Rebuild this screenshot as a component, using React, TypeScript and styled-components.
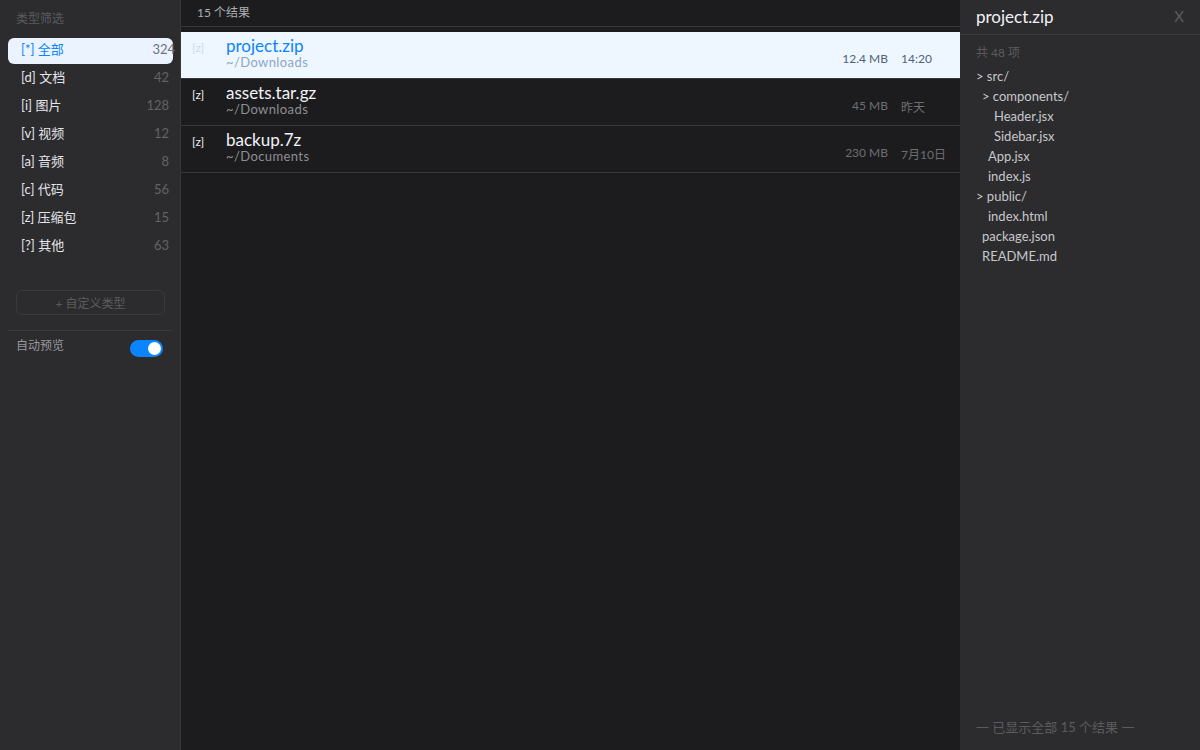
import styled, { createGlobalStyle } from "styled-components";

const GlobalStyle = createGlobalStyle`
  html, body {
    margin: 0;
    padding: 0;
    height: 100%;
    background: #1c1c1e;
  }
  #root {
    height: 100%;
  }
  * {
    box-sizing: border-box;
  }
`;

const FONT = `Lato, "Noto Sans CJK SC", sans-serif`;

type Category = { key: string; label: string; count: number };

const categories: Category[] = [
  { key: "*", label: "全部", count: 324 },
  { key: "d", label: "文档", count: 42 },
  { key: "i", label: "图片", count: 128 },
  { key: "v", label: "视频", count: 12 },
  { key: "a", label: "音频", count: 8 },
  { key: "c", label: "代码", count: 56 },
  { key: "z", label: "压缩包", count: 15 },
  { key: "?", label: "其他", count: 63 },
];

type FileItem = { name: string; path: string; size: string; time: string };

const files: FileItem[] = [
  { name: "project.zip", path: "~/Downloads", size: "12.4 MB", time: "14:20" },
  { name: "assets.tar.gz", path: "~/Downloads", size: "45 MB", time: "昨天" },
  { name: "backup.7z", path: "~/Documents", size: "230 MB", time: "7月10日" },
];

type TreeNode = { label: string; indent: number };

const tree: TreeNode[] = [
  { label: "> src/", indent: 0 },
  { label: "> components/", indent: 6 },
  { label: "Header.jsx", indent: 18 },
  { label: "Sidebar.jsx", indent: 18 },
  { label: "App.jsx", indent: 12 },
  { label: "index.js", indent: 12 },
  { label: "> public/", indent: 0 },
  { label: "index.html", indent: 12 },
  { label: "package.json", indent: 6 },
  { label: "README.md", indent: 6 },
];

const App = () => {
  return (
    <>
      <GlobalStyle />
      <Shell>
        {/* Filter sidebar */}
        <Sidebar>
          <SideTitle>类型筛选</SideTitle>
          <CategoryList>
            {categories.map((c, i) => (
              <CategoryItem key={c.key} $active={i === 0}>
                <span>
                  [{c.key}] {c.label}
                </span>
                <Count $active={i === 0}>{c.count}</Count>
              </CategoryItem>
            ))}
          </CategoryList>
          <CustomButton>+ 自定义类型</CustomButton>
          <SideDivider />
          <ToggleRow>
            <span>自动预览</span>
            <Toggle>
              <Knob />
            </Toggle>
          </ToggleRow>
        </Sidebar>

        {/* Results */}
        <Main>
          <ResultHeader>15 个结果</ResultHeader>
          <FileList>
            {files.map((f, i) => (
              <FileRow key={f.name} $selected={i === 0}>
                <TypeIcon $selected={i === 0}>[z]</TypeIcon>
                <FileInfo>
                  <FileName $selected={i === 0}>{f.name}</FileName>
                  <FilePath $selected={i === 0}>{f.path}</FilePath>
                </FileInfo>
                <FileSize $selected={i === 0}>{f.size}</FileSize>
                <FileTime $selected={i === 0}>{f.time}</FileTime>
              </FileRow>
            ))}
          </FileList>
        </Main>

        {/* Preview panel */}
        <Preview>
          <PreviewHeader>
            <PreviewTitle>project.zip</PreviewTitle>
            <CloseBtn>X</CloseBtn>
          </PreviewHeader>
          <PreviewBody>
            <ItemCount>共 48 项</ItemCount>
            {tree.map((n) => (
              <TreeRow key={n.label + n.indent} $indent={n.indent}>
                {n.label}
              </TreeRow>
            ))}
          </PreviewBody>
          <PreviewFooter>一 已显示全部 15 个结果 一</PreviewFooter>
        </Preview>
      </Shell>
    </>
  );
};

export default App;

// ===== Styled Components ===== //

const Shell = styled.div`
  display: flex;
  width: 1200px;
  height: 750px;
  font-family: ${FONT};
  overflow: hidden;
`;

const Sidebar = styled.aside`
  width: 181px;
  flex-shrink: 0;
  background: #2c2c2e;
  border-right: 1px solid #38383a;
  display: flex;
  flex-direction: column;
  padding: 11px 8px 0 8px;
`;

const SideTitle = styled.div`
  font-size: 12px;
  color: #5b5b5f;
  padding-left: 8px;
  height: 16px;
  line-height: 16px;
  margin-bottom: 11px;
`;

const CategoryList = styled.div`
  display: flex;
  flex-direction: column;
  gap: 2px;
`;

const CategoryItem = styled.div<{ $active?: boolean }>`
  height: 26px;
  width: 165px;
  display: flex;
  align-items: center;
  justify-content: space-between;
  padding: 0 0 5px 13px;
  border-radius: 6px;
  font-size: 13px;
  color: ${(p) => (p.$active ? "#0a84ff" : "#e5e5ea")};
  background: ${(p) => (p.$active ? "#eaf3ff" : "transparent")};
  white-space: nowrap;
`;

const Count = styled.span<{ $active?: boolean }>`
  color: ${(p) => (p.$active ? "#6d7480" : "#636366")};
  font-size: 13px;
  width: 30px;
  text-align: right;
  margin-right: ${(p) => (p.$active ? "-2px" : "4px")};
`;

const CustomButton = styled.div`
  margin: 30px 0 0 8px;
  width: 149px;
  height: 25px;
  border: 1px solid #3a3a3c;
  border-radius: 6px;
  display: flex;
  align-items: center;
  justify-content: center;
  font-size: 12px;
  color: #5b5b5f;
`;

const SideDivider = styled.div`
  height: 1px;
  background: #3a3a3c;
  margin: 15px 0 0 0;
  width: 164px;
`;

const ToggleRow = styled.div`
  display: flex;
  align-items: flex-start;
  justify-content: space-between;
  padding: 0 9px 0 8px;
  margin-top: 7px;
  font-size: 12px;
  line-height: 16px;
  color: #98989d;
`;

const Toggle = styled.div`
  width: 33px;
  height: 17px;
  border-radius: 9px;
  background: #0a84ff;
  position: relative;
  margin-top: 2px;
`;

const Knob = styled.div`
  position: absolute;
  right: 2px;
  top: 2px;
  width: 13px;
  height: 13px;
  border-radius: 50%;
  background: #ffffff;
`;

const Main = styled.main`
  flex: 1;
  background: #1c1c1e;
  display: flex;
  flex-direction: column;
`;

const ResultHeader = styled.div`
  height: 27px;
  border-bottom: 1px solid #38383a;
  font-size: 12px;
  color: #aeaeb2;
  padding: 3px 0 0 16px;
`;

const FileList = styled.div`
  margin-top: 5px;
  display: flex;
  flex-direction: column;
`;

const FileRow = styled.div<{ $selected?: boolean }>`
  height: 47px;
  display: flex;
  align-items: flex-start;
  padding: 5px 12px 0 11px;
  background: ${(p) => (p.$selected ? "#eef6ff" : "transparent")};
  border-bottom: 1px solid #38383a;
`;

const TypeIcon = styled.div<{ $selected?: boolean }>`
  width: 34px;
  flex-shrink: 0;
  font-size: 12px;
  padding-top: 3px;
  color: ${(p) => (p.$selected ? "#c5dcf2" : "#f2f2f7")};
`;

const FileInfo = styled.div`
  flex: 1;
  display: flex;
  flex-direction: column;
`;

const FileName = styled.div<{ $selected?: boolean }>`
  font-size: 17px;
  line-height: 18px;
  color: ${(p) => (p.$selected ? "#0a84ff" : "#f2f2f7")};
`;

const FilePath = styled.div<{ $selected?: boolean }>`
  font-size: 13px;
  line-height: 14px;
  letter-spacing: 0.4px;
  color: ${(p) => (p.$selected ? "#8ea6c4" : "#8e8e93")};
`;

const FileSize = styled.div<{ $selected?: boolean }>`
  width: 80px;
  text-align: right;
  font-size: 12px;
  padding-top: 14px;
  color: ${(p) => (p.$selected ? "#51627a" : "#6e6e73")};
`;

const FileTime = styled.div<{ $selected?: boolean }>`
  width: 47px;
  margin-left: 13px;
  font-size: 12px;
  padding-top: 14px;
  white-space: nowrap;
  color: ${(p) => (p.$selected ? "#51627a" : "#6e6e73")};
`;

const Preview = styled.aside`
  width: 240px;
  flex-shrink: 0;
  background: #2c2c2e;
  display: flex;
  flex-direction: column;
`;

const PreviewHeader = styled.div`
  height: 35px;
  border-bottom: 1px solid #3a3a3c;
  display: flex;
  align-items: center;
  justify-content: space-between;
  padding: 0 16px 2px 16px;
`;

const PreviewTitle = styled.div`
  font-size: 17px;
  color: #f2f2f7;
`;

const CloseBtn = styled.div`
  font-size: 15px;
  color: #5b5b5f;
`;

const PreviewBody = styled.div`
  flex: 1;
  padding: 10px 16px 0 16px;
  display: flex;
  flex-direction: column;
`;

const ItemCount = styled.div`
  font-size: 12px;
  color: #5b5b5f;
  height: 16px;
  line-height: 16px;
  margin-bottom: 5px;
`;

const TreeRow = styled.div<{ $indent: number }>`
  height: 20px;
  line-height: 20px;
  font-size: 13px;
  color: #c7c7cc;
  padding-left: ${(p) => p.$indent}px;
  white-space: nowrap;
`;

const PreviewFooter = styled.div`
  padding: 0 16px 14px 16px;
  font-size: 13px;
  color: #5b5b5f;
`;
